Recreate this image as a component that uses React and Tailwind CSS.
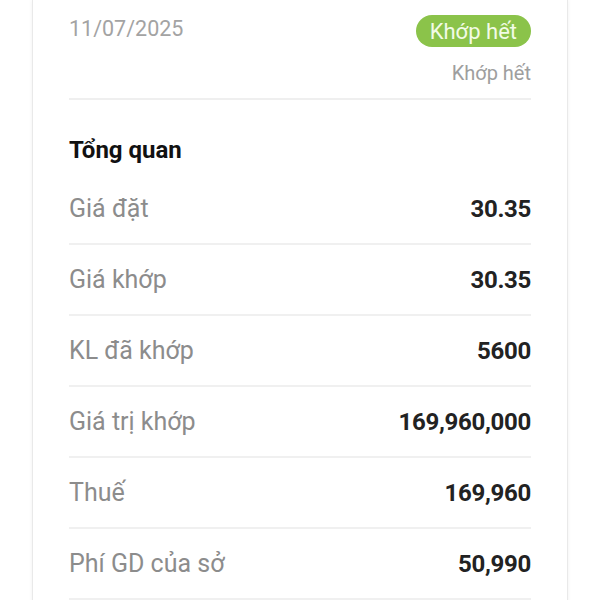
export default function App() {
  const rows = [
    { label: "Giá đặt", value: "30.35" },
    { label: "Giá khớp", value: "30.35" },
    { label: "KL đã khớp", value: "5600" },
    { label: "Giá trị khớp", value: "169,960,000" },
    { label: "Thuế", value: "169,960" },
    { label: "Phí GD của sở", value: "50,990" },
  ];

  return (
    <div className="h-[600px] overflow-hidden bg-white px-[32px] font-['Roboto',sans-serif]">
      <div className="min-h-[620px] border-x border-[#e9e9e9] bg-white px-[36px] pt-[15px] shadow-[0_0_4px_rgba(0,0,0,0.06)]">
        {/* header */}
        <div className="flex items-start justify-between">
          <div className="mt-[2px] text-[21.5px] leading-[24px] text-[#a3a3a3]">11/07/2025</div>
          <div className="flex flex-col items-end">
            <span className="flex h-[32px] items-center rounded-full bg-[#8bc34a] px-[14px] text-[22px] text-[#f2fbe6]">
              Khớp hết
            </span>
            <span className="mt-[14px] text-[20px] leading-[24px] text-[#9e9e9e]">Khớp hết</span>
          </div>
        </div>

        <div className="mt-[13px] h-[2px] bg-[#efefef]"></div>

        <h2 className="mt-[36px] text-[24px] font-bold leading-[28px] text-[#111]">Tổng quan</h2>

        <div className="mt-[10px]">
          {rows.map((r) => (
            <div
              key={r.label}
              className="flex h-[71px] items-center justify-between border-b-2 border-[#f0f0f0]"
            >
              <span className="text-[25px] text-[#8c8c8c]">{r.label}</span>
              <span className="text-[24px] font-bold tracking-[-0.3px] text-[#222]">{r.value}</span>
            </div>
          ))}
        </div>
      </div>
    </div>
  );
}
